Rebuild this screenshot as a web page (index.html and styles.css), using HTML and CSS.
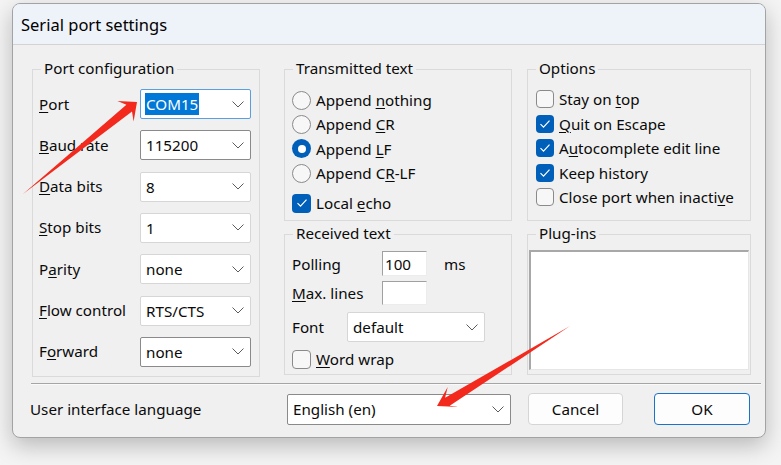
FILE: index.html
```html
<!DOCTYPE html>
<html>
<head>
<meta charset="utf-8">
<link rel="stylesheet" href="styles.css">
</head>
<body>
<div class="window">
  <div class="titlebar">Serial port settings</div>
  <div class="content">
    <div class="columns">
      <div class="group port-group">
        <div class="group-title">Port configuration</div>
        <div class="port-grid">
          <span class="label"><u>P</u>ort</span>
          <div class="combo focused"><span class="sel">COM15</span><svg class="chev" width="12" height="7" viewBox="0 0 12 7"><path d="M0.5 0.5l5.5 5.5 5.5-5.5" /></svg></div>
          <span class="label"><u>B</u>aud rate</span>
          <div class="combo dark"><span>115200</span><svg class="chev" width="12" height="7" viewBox="0 0 12 7"><path d="M0.5 0.5l5.5 5.5 5.5-5.5" /></svg></div>
          <span class="label"><u>D</u>ata bits</span>
          <div class="combo"><span>8</span><svg class="chev" width="12" height="7" viewBox="0 0 12 7"><path d="M0.5 0.5l5.5 5.5 5.5-5.5" /></svg></div>
          <span class="label"><u>S</u>top bits</span>
          <div class="combo"><span>1</span><svg class="chev" width="12" height="7" viewBox="0 0 12 7"><path d="M0.5 0.5l5.5 5.5 5.5-5.5" /></svg></div>
          <span class="label">P<u>a</u>rity</span>
          <div class="combo"><span>none</span><svg class="chev" width="12" height="7" viewBox="0 0 12 7"><path d="M0.5 0.5l5.5 5.5 5.5-5.5" /></svg></div>
          <span class="label"><u>F</u>low control</span>
          <div class="combo"><span>RTS/CTS</span><svg class="chev" width="12" height="7" viewBox="0 0 12 7"><path d="M0.5 0.5l5.5 5.5 5.5-5.5" /></svg></div>
          <span class="label">F<u>o</u>rward</span>
          <div class="combo dark"><span>none</span><svg class="chev" width="12" height="7" viewBox="0 0 12 7"><path d="M0.5 0.5l5.5 5.5 5.5-5.5" /></svg></div>
        </div>
      </div>

      <div class="col col-mid">
        <div class="group tx-group">
          <div class="group-title">Transmitted text</div>
          <div class="opt"><span class="radio"></span><span>Append <u>n</u>othing</span></div>
          <div class="opt"><span class="radio"></span><span>Append <u>C</u>R</span></div>
          <div class="opt"><span class="radio on"></span><span>Append <u>L</u>F</span></div>
          <div class="opt"><span class="radio"></span><span>Append C<u>R</u>-LF</span></div>
          <div class="opt echo"><span class="check on"><svg width="12" height="10" viewBox="0 0 12 10"><path d="M1.5 5.2l3 3 6-6.5" /></svg></span><span>Local <u>e</u>cho</span></div>
        </div>
        <div class="group rx-group">
          <div class="group-title">Received text</div>
          <div class="rx-row">
            <span class="rx-label">Polling</span>
            <span class="edit">100</span>
            <span class="unit">ms</span>
          </div>
          <div class="rx-row row2">
            <span class="rx-label"><u>M</u>ax. lines</span>
            <span class="edit"></span>
          </div>
          <div class="rx-row row3">
            <span class="font-label">Font</span>
            <div class="combo font-combo"><span>default</span><svg class="chev" width="12" height="7" viewBox="0 0 12 7"><path d="M0.5 0.5l5.5 5.5 5.5-5.5" /></svg></div>
          </div>
          <div class="opt wrap"><span class="check"></span><span><u>W</u>ord wrap</span></div>
        </div>
      </div>

      <div class="col col-right">
        <div class="group opt-group">
          <div class="group-title">Options</div>
          <div class="opt o2"><span class="check"></span><span>Stay on <u>t</u>op</span></div>
          <div class="opt o2"><span class="check on"><svg width="12" height="10" viewBox="0 0 12 10"><path d="M1.5 5.2l3 3 6-6.5" /></svg></span><span><u>Q</u>uit on Escape</span></div>
          <div class="opt o2"><span class="check on"><svg width="12" height="10" viewBox="0 0 12 10"><path d="M1.5 5.2l3 3 6-6.5" /></svg></span><span>A<u>u</u>tocomplete edit line</span></div>
          <div class="opt o2"><span class="check on"><svg width="12" height="10" viewBox="0 0 12 10"><path d="M1.5 5.2l3 3 6-6.5" /></svg></span><span>Keep history</span></div>
          <div class="opt o2"><span class="check"></span><span>Close port when inacti<u>v</u>e</span></div>
        </div>
        <div class="group plug-group">
          <div class="group-title">Plug-ins</div>
          <div class="listbox"></div>
        </div>
      </div>
    </div>

    <div class="separator"></div>

    <div class="bottom-row">
      <span class="lang-label">User interface language</span>
      <div class="combo lang-combo"><span>English (en)</span><svg class="chev" width="12" height="7" viewBox="0 0 12 7"><path d="M0.5 0.5l5.5 5.5 5.5-5.5" /></svg></div>
      <button class="btn cancel">Cancel</button>
      <button class="btn ok">OK</button>
    </div>
  </div>
</div>

<svg class="arrows" width="781" height="465" viewBox="0 0 781 465">
  <polygon points="23,194 126.4,104.7 117.4,101.1 137,102 133.6,121.4 132,111.5" />
  <polygon points="570,326 445.1,397.8 447.7,386.9 437,406 458.8,406.9 449.7,405.8" />
</svg>
</body>
</html>
```

FILE: styles.css
```css
* { box-sizing: border-box; }

body {
  margin: 0;
  background: #f4f4f4;
  font-family: "Noto Sans", "Open Sans", sans-serif;
  font-size: 15.2px;
  color: #0a0a0a;
  width: 781px;
  height: 465px;
  overflow: hidden;
  position: relative;
}

u { text-decoration-thickness: 1px; text-underline-offset: 2px; }

.window {
  margin: 3px 0 0 12px;
  width: 754px;
  height: 435px;
  border: 1px solid #a3a3a3;
  border-radius: 8px;
  overflow: hidden;
  background: #f0f0f0;
  box-shadow: 0 8px 22px rgba(0, 0, 0, 0.24);
  display: flex;
  flex-direction: column;
}

.titlebar {
  height: 41px;
  flex: none;
  background: #eef2f9;
  border-bottom: 1px solid #d3d3d3;
  padding-left: 8px;
  display: flex;
  align-items: center;
  font-size: 16.5px;
  color: #000;
}

.content {
  padding: 24px 13px 0 19px;
}

.columns {
  display: flex;
}

.group {
  position: relative;
  border: 1px solid #dadada;
}

.group-title {
  position: absolute;
  top: -12px;
  left: 8px;
  padding: 0 3px;
  background: #f0f0f0;
  line-height: 20px;
}

.port-group {
  width: 228px;
  height: 308px;
  padding: 19px 8px 0 6px;
}

.port-grid {
  display: grid;
  grid-template-columns: 101px 111px;
  grid-auto-rows: 30px;
  row-gap: 11.33px;
  align-items: center;
}
.label { margin-top: -1px; }

.combo {
  height: 30px;
  background: #fff;
  border: 1px solid #d6d6d6;
  border-radius: 2px;
  display: flex;
  align-items: center;
  padding-left: 5px;
  padding-right: 6px;
}
.combo span { flex: 1; white-space: nowrap; }
.combo.dark { border-color: #8a8a8a; }
.combo.focused { border-color: #5a9fe0; padding-left: 4px; }
.combo .sel { flex: none; background: #0078d7; color: #fff; padding: 0 1px; line-height: 22px; }
.combo.focused .chev { margin-left: auto; }

.chev { flex: none; }
.chev path { fill: none; stroke: #5c5c5c; stroke-width: 1; }

.col { display: flex; flex-direction: column; }
.col-mid { margin-left: 24px; width: 228px; }
.col-right { margin-left: 15px; width: 224px; }

.tx-group {
  height: 152px;
  padding: 18px 0 0 7px;
}

.opt {
  display: flex;
  align-items: center;
  gap: 5px;
  height: 24.3px;
  white-space: nowrap;
}
.opt.echo { margin-top: 6px; }

.radio {
  width: 19px;
  height: 19px;
  border-radius: 50%;
  border: 1px solid #8a8a8a;
  background: #f7f7f7;
  flex: none;
  display: flex;
  align-items: center;
  justify-content: center;
}
.radio.on {
  border: none;
  background: #005fb8;
}
.radio.on::after {
  content: "";
  width: 8px;
  height: 8px;
  border-radius: 50%;
  background: #fff;
}

.check {
  width: 19px;
  height: 19px;
  border-radius: 4px;
  border: 1px solid #8a8a8a;
  background: #f7f7f7;
  flex: none;
  display: flex;
  align-items: center;
  justify-content: center;
}
.check.on {
  border: none;
  background: #005fb8;
}
.check svg path { fill: none; stroke: #fff; stroke-width: 1.2; }

.rx-group {
  margin-top: 13px;
  height: 141px;
  padding: 16px 0 0 7px;
}

.rx-row {
  display: flex;
  align-items: center;
  height: 25px;
}
.rx-row.row2 { margin-top: 5px; height: 24px; }
.rx-row.row3 { margin-top: 7px; height: 30px; }

.rx-label { width: 90px; }
.edit {
  width: 45px;
  height: 100%;
  background: #fff;
  border-top: 1px solid #a0a0a0;
  border-left: 1px solid #a0a0a0;
  border-right: 1px solid #ececec;
  border-bottom: 1px solid #ececec;
  padding-left: 2px;
  display: flex;
  align-items: center;
}
.unit { margin-left: 17px; }

.font-label { width: 55px; }
.font-combo { width: 138px; height: 30px; }

.opt.wrap { margin-top: 7px; height: 20px; }

.opt-group {
  height: 152px;
  padding: 17px 0 0 8px;
}
.opt.o2 { height: 24.5px; }
.opt-group .check { width: 18px; height: 18px; }

.plug-group {
  margin-top: 13px;
  height: 141px;
  padding: 15px 1px 4px 1px;
}
.listbox {
  height: 100%;
  background: #fff;
  border-top: 2px solid #a8a8a8;
  border-left: 2px solid #a8a8a8;
  border-right: 1px solid #e6e6e6;
  border-bottom: 1px solid #e6e6e6;
}

.separator {
  margin: 6px -9px 0 -1px;
  border-top: 1px solid #a5a5a5;
  border-bottom: 1px solid #fafafa;
}

.bottom-row {
  display: flex;
  align-items: center;
  margin-top: 8px;
  margin-left: -2px;
}
.lang-label { width: 257px; }
.lang-combo { width: 224px; height: 31px; border-color: #8a8a8a; }
.btn {
  font: inherit;
  color: #0a0a0a;
  height: 32px;
  border-radius: 4px;
  background: #fdfdfd;
  display: flex;
  align-items: center;
  justify-content: center;
  padding: 0;
}
.cancel {
  margin-left: 17px;
  width: 95px;
  border: 1px solid #d5d5d5;
}
.ok {
  margin-left: 31px;
  width: 96px;
  border: 1.5px solid #1a73c9;
}

.arrows {
  position: absolute;
  left: 0;
  top: 0;
  pointer-events: none;
}
.arrows polygon { fill: #f2291c; }
```
